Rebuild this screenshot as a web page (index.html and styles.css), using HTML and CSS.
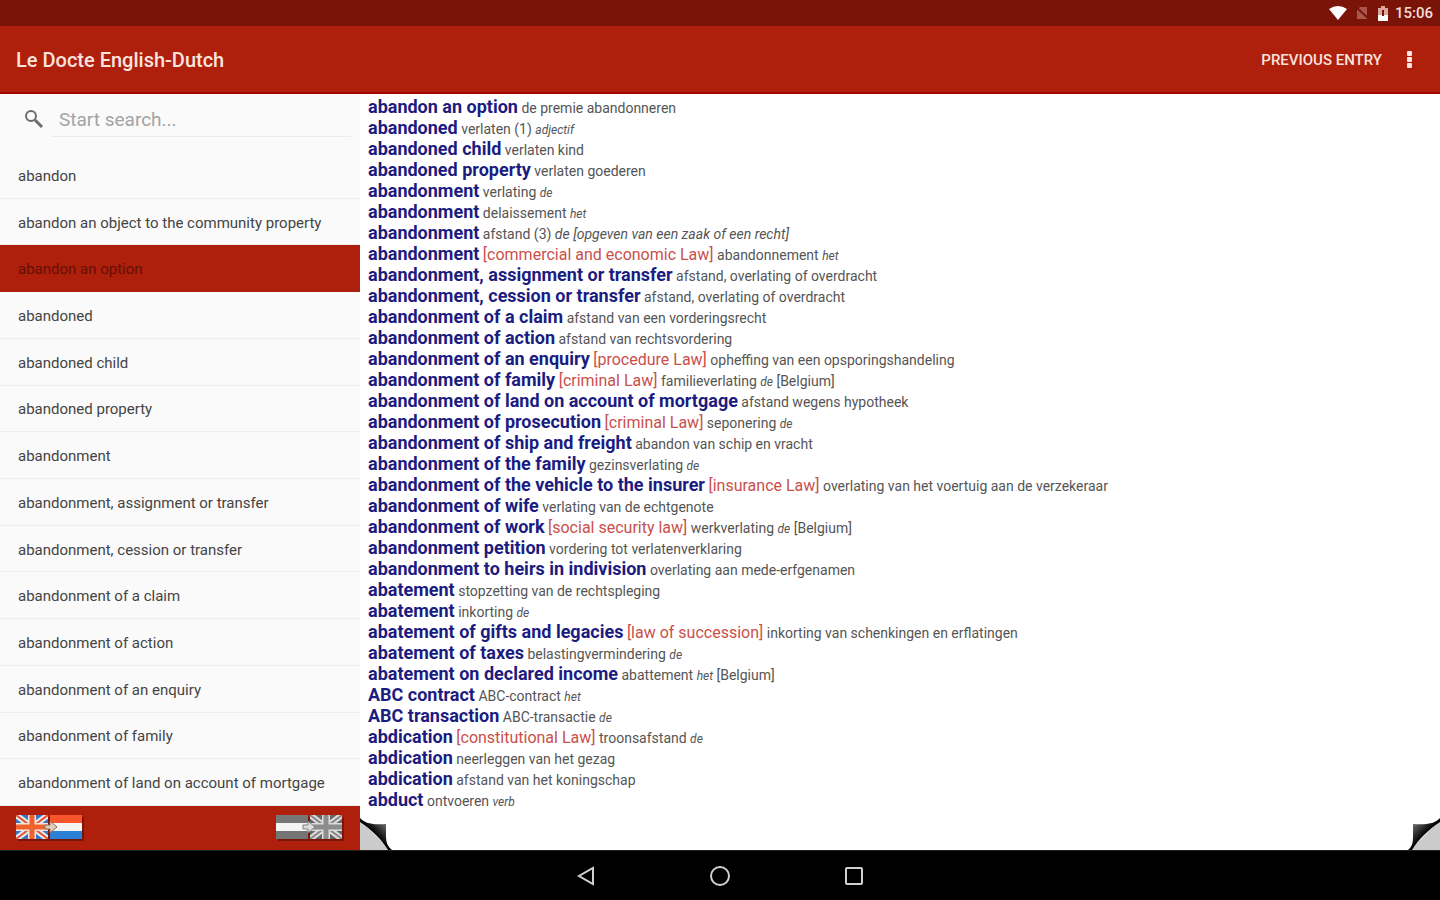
FILE: index.html
```
<!DOCTYPE html>
<html lang="en">
<head>
    <meta charset="UTF-8">
    <meta name="viewport" content="width=device-width, initial-scale=1.0">
    <title>Le Docte English-Dutch</title>
    <link rel="stylesheet" href="styles.css">
</head>
<body>
    <!-- status bar -->
    <div class="status-bar">
        <svg width="18" height="14" viewBox="0 0 18 14"><path d="M0 3 Q9 -3 18 3 L9 14 Z" fill="#fff"/></svg>
        <svg width="12" height="14" viewBox="0 0 12 14"><path d="M1 4 L4 1 H11 V13 H1 Z" fill="#a8574b"/><path d="M1 2 L12 12" stroke="#7a1408" stroke-width="2"/></svg>
        <svg width="12" height="15" viewBox="0 0 12 15"><path d="M4 0 H8 V2 H11 V15 H1 V2 H4 Z" fill="#dba79f"/><path d="M1 9 H11 V15 H1 Z" fill="#fff"/><path d="M5 4 H7 V10 H5 Z" fill="#7a1408"/></svg>
        <span class="clock">15:06</span>
    </div>

    <!-- app bar -->
    <header class="app-bar">
        <h1>Le Docte English-Dutch</h1>
        <button class="previous-btn">PREVIOUS ENTRY</button>
        <button class="menu-btn" aria-label="More options">
            <svg width="6" height="18" viewBox="0 0 6 18" fill="#fbe3df"><rect x="1" y="0" width="5" height="5" rx="1"/><rect x="1" y="6" width="5" height="5" rx="1"/><rect x="1" y="12" width="5" height="5" rx="1"/></svg>
        </button>
    </header>

    <div class="content">
        <aside class="sidebar">
            <div class="search">
                <label for="search" aria-label="Search">
                    <svg width="20" height="20" viewBox="0 0 20 20" fill="none" stroke="#6c6c6c"><circle cx="7" cy="7" r="5" stroke-width="2"/><path d="M11 11 L18 18" stroke-width="3"/></svg>
                </label>
                <input type="text" id="search" placeholder="Start search...">
            </div>
            <ul class="word-list">
                <li><a href="#">abandon</a></li>
                <li><a href="#">abandon an object to the community property</a></li>
                <li class="selected"><a href="#">abandon an option</a></li>
                <li><a href="#">abandoned</a></li>
                <li><a href="#">abandoned child</a></li>
                <li><a href="#">abandoned property</a></li>
                <li><a href="#">abandonment</a></li>
                <li><a href="#">abandonment, assignment or transfer</a></li>
                <li><a href="#">abandonment, cession or transfer</a></li>
                <li><a href="#">abandonment of a claim</a></li>
                <li><a href="#">abandonment of action</a></li>
                <li><a href="#">abandonment of an enquiry</a></li>
                <li><a href="#">abandonment of family</a></li>
                <li><a href="#">abandonment of land on account of mortgage</a></li>
            </ul>
            <div class="languages">
                <button aria-label="English to Dutch">
                    <svg width="68" height="26" viewBox="0 0 68 26">
                        <rect x="2" y="2" width="66" height="24" rx="1" fill="#4a0c06" opacity=".5"/>
                        <svg width="32" height="24" viewBox="0 0 32 24">
                            <rect width="32" height="24" fill="#3976bd"/>
                            <path d="M0 0 L32 24 M32 0 L0 24" stroke="#e9eaf2" stroke-width="6"/>
                            <path d="M0 0 L32 24 M32 0 L0 24" stroke="#e8552c" stroke-width="2"/>
                            <path d="M16 0 V24 M0 12 H32" stroke="#f3e4e0" stroke-width="8"/>
                            <path d="M16 0 V24 M0 12 H32" stroke="#f0622c" stroke-width="5"/>
                        </svg>
                        <rect x="34" width="32" height="8" fill="#f8562a"/>
                        <rect x="34" y="8" width="32" height="8" fill="#f4f4f4"/>
                        <rect x="34" y="16" width="32" height="8" fill="#2a80d4"/>
                        <path d="M29 10 H34 V6 L41 12 L34 18 V14 H29 Z" fill="#ddd0bb" stroke="#8d6d5c"/>
                    </svg>
                </button>
                <button aria-label="Dutch to English">
                    <svg width="68" height="26" viewBox="0 0 68 26">
                        <rect x="2" y="2" width="66" height="24" rx="1" fill="#4a0c06" opacity=".5"/>
                        <rect width="32" height="8" fill="#777"/>
                        <rect y="8" width="32" height="8" fill="#f4f4f4"/>
                        <rect y="16" width="32" height="8" fill="#747474"/>
                        <svg x="34" width="32" height="24" viewBox="0 0 32 24">
                            <rect width="32" height="24" fill="#666"/>
                            <path d="M0 0 L32 24 M32 0 L0 24" stroke="#ddd" stroke-width="6"/>
                            <path d="M0 0 L32 24 M32 0 L0 24" stroke="#888" stroke-width="2"/>
                            <path d="M16 0 V24 M0 12 H32" stroke="#ddd" stroke-width="8"/>
                            <path d="M16 0 V24 M0 12 H32" stroke="#8c8c8c" stroke-width="5"/>
                        </svg>
                        <path d="M27 10 H32 V6 L39 12 L32 18 V14 H27 Z" fill="#ddd" stroke="#808080"/>
                    </svg>
                </button>
            </div>
        </aside>

        <main class="entries">
            <p><b>abandon an option</b> de premie abandonneren</p>
            <p><b>abandoned</b> verlaten (1) <i>adjectif</i></p>
            <p><b>abandoned child</b> verlaten kind</p>
            <p><b>abandoned property</b> verlaten goederen</p>
            <p><b>abandonment</b> verlating <i>de</i></p>
            <p><b>abandonment</b> delaissement <i>het</i></p>
            <p><b>abandonment</b> afstand (3) <i class="note">de [opgeven van een zaak of een recht]</i></p>
            <p><b>abandonment</b> <span>[commercial and economic Law]</span> abandonnement <i>het</i></p>
            <p><b>abandonment, assignment or transfer</b> afstand, overlating of overdracht</p>
            <p><b>abandonment, cession or transfer</b> afstand, overlating of overdracht</p>
            <p><b>abandonment of a claim</b> afstand van een vorderingsrecht</p>
            <p><b>abandonment of action</b> afstand van rechtsvordering</p>
            <p><b>abandonment of an enquiry</b> <span>[procedure Law]</span> opheffing van een opsporingshandeling</p>
            <p><b>abandonment of family</b> <span>[criminal Law]</span> familieverlating <i>de</i> [Belgium]</p>
            <p><b>abandonment of land on account of mortgage</b> afstand wegens hypotheek</p>
            <p><b>abandonment of prosecution</b> <span>[criminal Law]</span> seponering <i>de</i></p>
            <p><b>abandonment of ship and freight</b> abandon van schip en vracht</p>
            <p><b>abandonment of the family</b> gezinsverlating <i>de</i></p>
            <p><b>abandonment of the vehicle to the insurer</b> <span>[insurance Law]</span> overlating van het voertuig aan de verzekeraar</p>
            <p><b>abandonment of wife</b> verlating van de echtgenote</p>
            <p><b>abandonment of work</b> <span>[social security law]</span> werkverlating <i>de</i> [Belgium]</p>
            <p><b>abandonment petition</b> vordering tot verlatenverklaring</p>
            <p><b>abandonment to heirs in indivision</b> overlating aan mede-erfgenamen</p>
            <p><b>abatement</b> stopzetting van de rechtspleging</p>
            <p><b>abatement</b> inkorting <i>de</i></p>
            <p><b>abatement of gifts and legacies</b> <span>[law of succession]</span> inkorting van schenkingen en erflatingen</p>
            <p><b>abatement of taxes</b> belastingvermindering <i>de</i></p>
            <p><b>abatement on declared income</b> abattement <i>het</i> [Belgium]</p>
            <p><b>ABC contract</b> ABC-contract <i>het</i></p>
            <p><b>ABC transaction</b> ABC-transactie <i>de</i></p>
            <p><b>abdication</b> <span>[constitutional Law]</span> troonsafstand <i>de</i></p>
            <p><b>abdication</b> neerleggen van het gezag</p>
            <p><b>abdication</b> afstand van het koningschap</p>
            <p><b>abduct</b> ontvoeren <i>verb</i></p>

            <!-- page corners -->
            <button class="corner corner-left" aria-label="Previous page">
                <svg width="32" height="32" viewBox="0 0 32 32">
                    <defs>
                        <linearGradient id="foldLeft" x1="0.4" y1="0.6" x2="0.8" y2="0.2"><stop offset="0.2" stop-color="#000"/><stop offset="1" stop-color="#666"/></linearGradient>
                    </defs>
                    <path d="M0 2 L30 32 H0 Z" fill="#cbcbcb"/>
                    <path d="M0 0 C5 5 10 7 26 6 V18 C26 25 28 29 32 32 H28 C22 22 12 12 0 4 Z" fill="url(#foldLeft)"/>
                </svg>
            </button>
            <button class="corner corner-right" aria-label="Next page">
                <svg width="32" height="32" viewBox="0 0 32 32">
                    <defs>
                        <linearGradient id="foldRight" x1="0.6" y1="0.6" x2="0.2" y2="0.2"><stop offset="0.2" stop-color="#000"/><stop offset="1" stop-color="#666"/></linearGradient>
                    </defs>
                    <path d="M32 2 L2 32 H32 Z" fill="#cbcbcb"/>
                    <path d="M32 0 C27 5 22 7 5 6 V18 C5 25 4 29 0 32 H4 C10 22 20 12 32 4 Z" fill="url(#foldRight)"/>
                </svg>
            </button>
        </main>
    </div>

    <!-- navigation bar -->
    <nav class="nav-bar">
        <button aria-label="Back"><svg width="24" height="24" viewBox="0 0 24 24"><path d="M19 4 V20 L5 12 Z"/></svg></button>
        <button aria-label="Home"><svg width="24" height="24" viewBox="0 0 24 24"><circle cx="12" cy="12" r="9"/></svg></button>
        <button aria-label="Recent apps"><svg width="24" height="24" viewBox="0 0 24 24"><rect x="4" y="4" width="16" height="16" rx="1"/></svg></button>
    </nav>
</body>
</html>
```
FILE: styles.css
```
* {
    box-sizing: border-box;
}
body {
    display: flex;
    flex-direction: column;
    height: 100vh;
    margin: 0;
    background-color: #fff;
    color: #555;
    font-family: Roboto, sans-serif;
    overflow: hidden;
}
button {
    padding: 0;
    border: none;
    background: none;
    font-family: inherit;
    cursor: pointer;
}
svg {
    display: block;
}
.status-bar {
    display: flex;
    flex: none;
    align-items: center;
    justify-content: flex-end;
    gap: 9px;
    height: 26px;
    padding-right: 7px;
    background-color: #7a1408;
}
.clock {
    margin-left: -3px;
    color: #f3dcd8;
    font-size: 15px;
    font-weight: 500;
}
.app-bar {
    display: flex;
    flex: none;
    align-items: center;
    height: 68px;
    padding: 2px 24px 0 16px;
    background-color: #ae1f0c;
    border-bottom: 2px solid #a50500;
}
.app-bar h1 {
    flex: 1;
    margin: 0;
    color: #fbe3df;
    font-size: 20px;
    font-weight: 500;
}
.previous-btn {
    color: #fbe3df;
    font-size: 15px;
    font-weight: 500;
}
.menu-btn {
    margin-left: 20px;
    padding: 4px;
}
.content {
    display: flex;
    flex: 1;
    min-height: 0;
}

/* word list */
.sidebar {
    display: flex;
    flex-direction: column;
    width: 25%;
    background-color: #fafafa;
}
.search {
    display: flex;
    flex: none;
    align-items: flex-start;
    height: 58px;
    padding: 0 9px 0 24px;
}
.search label {
    margin-top: 15px;
}
.search input {
    flex: 1;
    min-width: 0;
    height: 43px;
    margin-left: 8px;
    padding: 8px 7px 0;
    border: none;
    border-bottom: 1px solid #ececec;
    background: none;
    font-family: inherit;
    font-size: 19px;
    outline: none;
}
.search input::placeholder {
    color: #a3a3a3;
}
.word-list {
    display: flex;
    flex: 1;
    flex-direction: column;
    min-height: 0;
    margin: 0;
    padding: 0;
    list-style: none;
}
.word-list li {
    flex: 1;
    border-bottom: 1px solid #eee;
}
.word-list a {
    display: flex;
    align-items: center;
    height: 100%;
    padding: 2px 0 0 18px;
    color: #444;
    font-size: 15px;
    text-decoration: none;
    white-space: nowrap;
}
.word-list .selected {
    background-color: #ae1f0c;
    border-color: #ae1f0c;
}
.word-list .selected a {
    color: #641006;
}
.languages {
    display: flex;
    flex: none;
    align-items: center;
    justify-content: space-between;
    height: 44px;
    padding: 0 16px;
    background-color: #ae1f0c;
}

/* dictionary text */
.entries {
    position: relative;
    flex: 1;
    padding: 2px 8px 0;
    background-color: #fff;
    overflow: hidden;
}
.entries p {
    height: 21px;
    margin: 0;
    font-size: 14px;
    line-height: 21px;
    white-space: nowrap;
}
.entries b {
    color: #1c1c80;
    font-size: 18px;
}
.entries span {
    color: #c9504b;
    font-size: 16px;
}
.entries i {
    font-size: 12px;
}
.entries .note {
    font-size: 14px;
}
.corner {
    position: absolute;
    bottom: 0;
}
.corner-left {
    left: 0;
}
.corner-right {
    right: 0;
}

/* navigation bar */
.nav-bar {
    display: flex;
    flex: none;
    align-items: center;
    justify-content: center;
    gap: 110px;
    height: 50px;
    background-color: #000;
    border-top: 1px solid #222;
}
.nav-bar svg {
    fill: none;
    stroke: #d0d0d0;
    stroke-width: 2;
}
```
